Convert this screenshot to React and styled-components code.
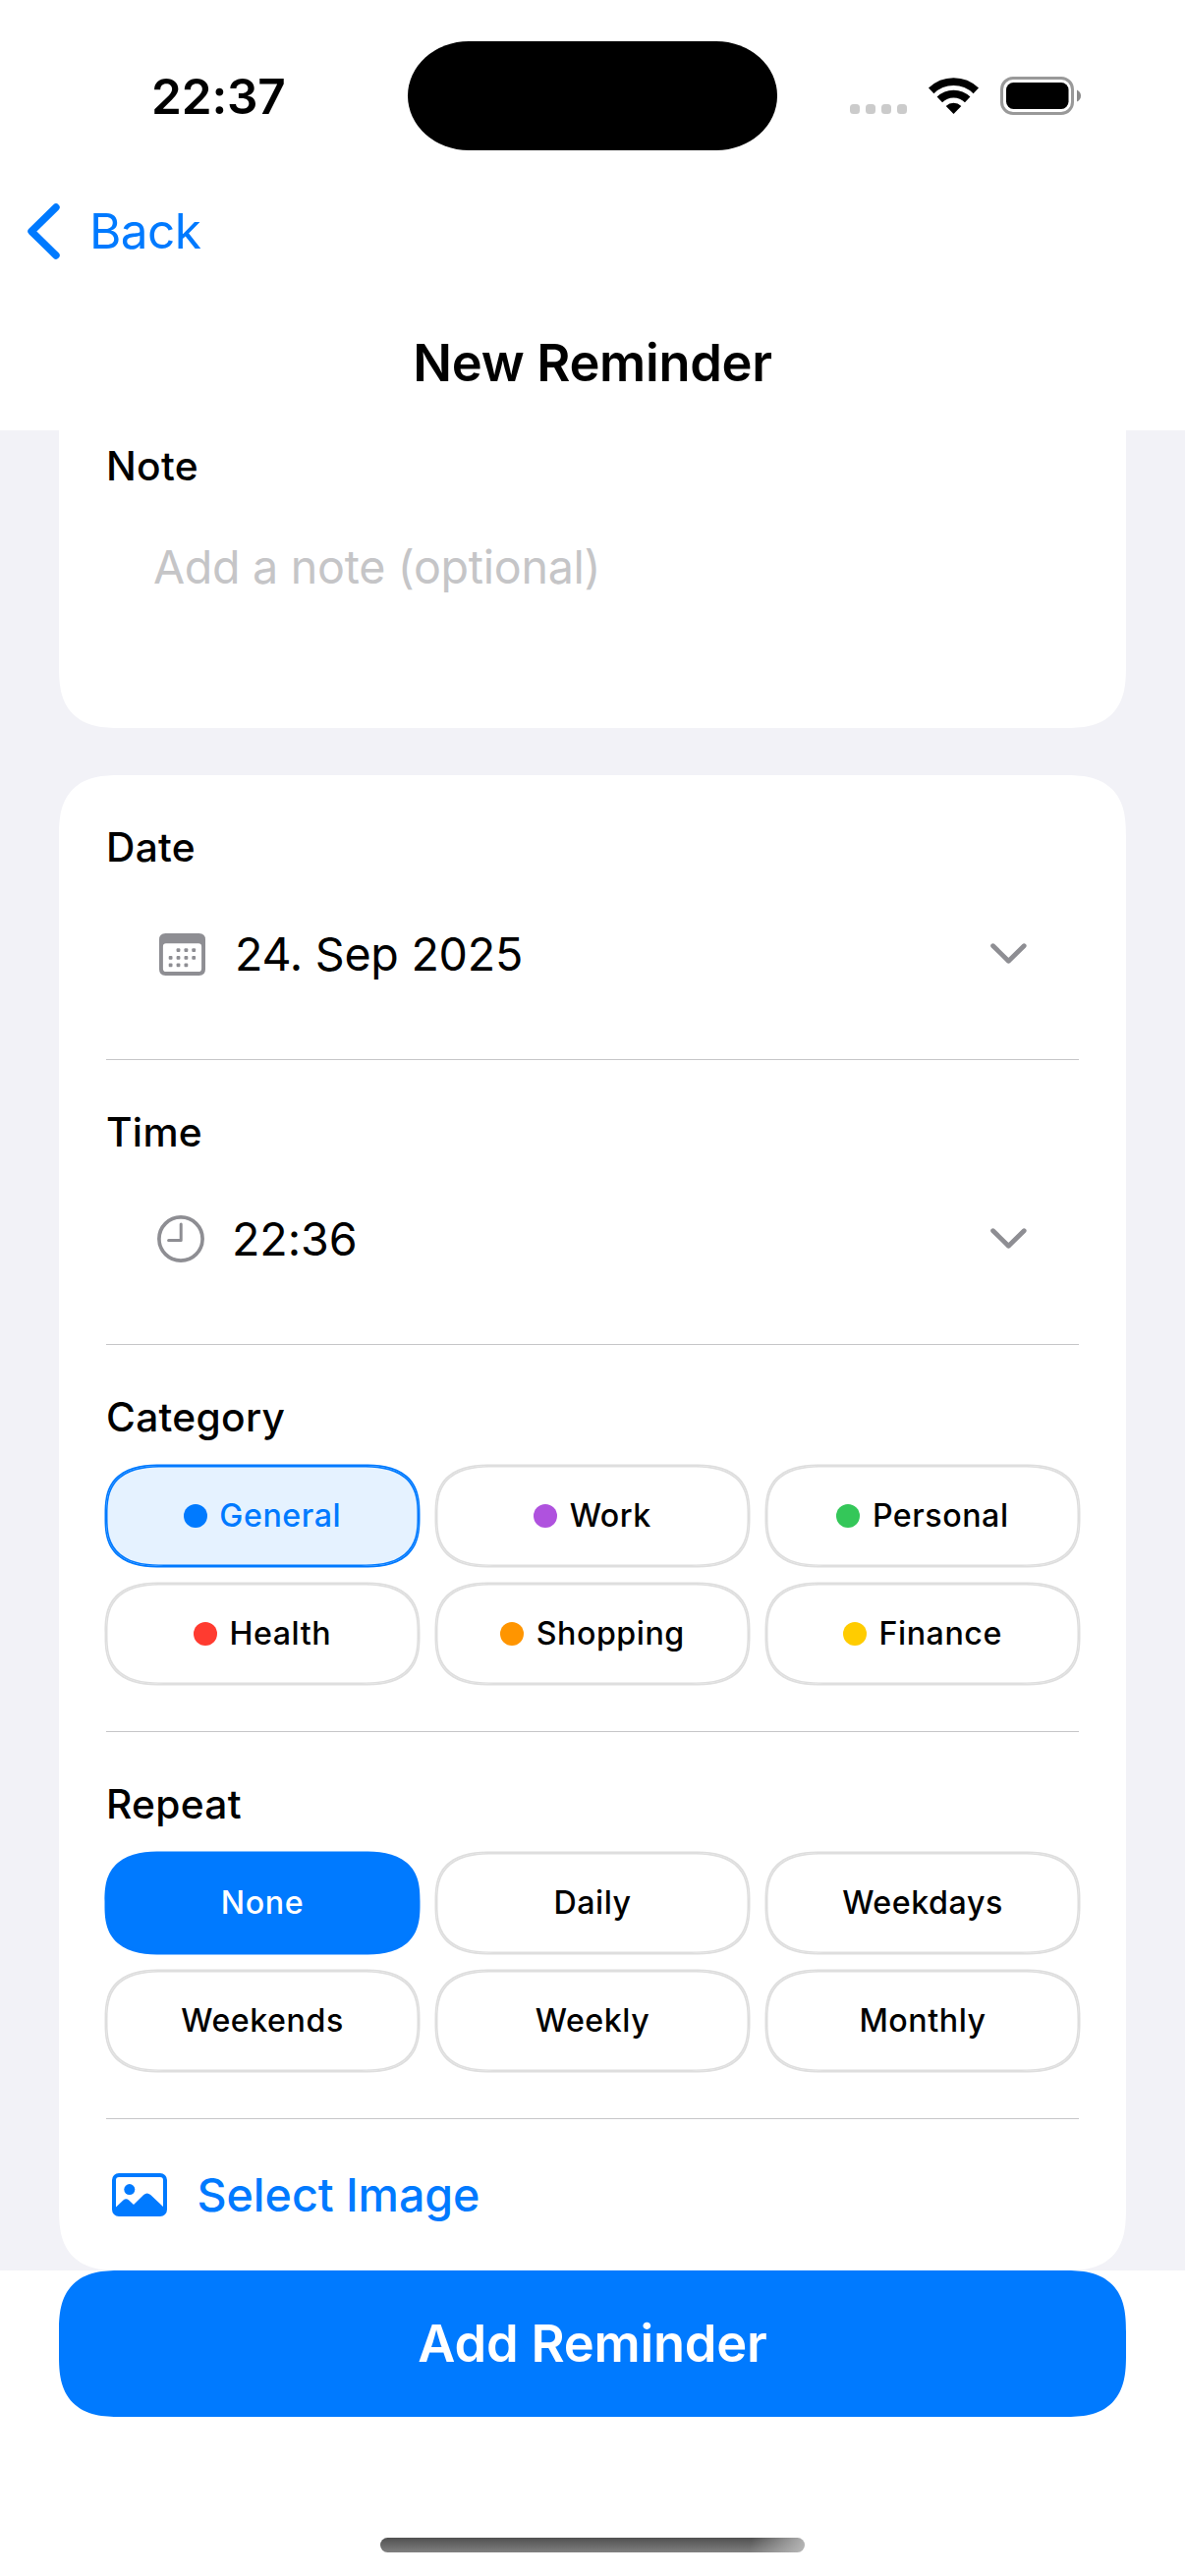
import React from "react";
import styled, { createGlobalStyle, css } from "styled-components";

const BLUE = "#007aff";
const GREY = "#8e8e93";

const GlobalStyle = createGlobalStyle`
  *, *::before, *::after { box-sizing: border-box; }
  body {
    margin: 0;
    background: #fff;
    font-family: Inter, "Liberation Sans", sans-serif;
    color: #000;
    font-feature-settings: "calt" 0;
  }
  button { font-family: inherit; border: 0; background: none; padding: 0; margin: 0; }
  svg { display: block; flex: none; overflow: visible; }
`;

/* Continuous corners, falling back to circular ones. */
const smooth = (r, limit) => css`
  border-radius: ${r}px;
  @supports (corner-shape: superellipse(1.4)) {
    border-radius: ${r * 1.3}px / ${Math.min(r * 1.3, limit)}px;
    corner-shape: superellipse(1.42);
  }
`;

const Screen = styled.div`
  display: flex;
  flex-direction: column;
  width: 1206px;
  height: 2622px;
  overflow: hidden;
  background: #fff;
`;

const StatusBar = styled.header`
  display: grid;
  grid-template-columns: 415px 376px 1fr;
  align-items: center;
  height: 194px;
`;

const Clock = styled.div`
  padding: 2px 0 0 154px;
  font-size: 49.5px;
  font-weight: 600;
  line-height: 60px;
  letter-spacing: -0.15px;
`;

const Island = styled.div`
  height: 111px;
  background: #000;
  border-radius: 62px / 55.5px;
`;

const StatusIcons = styled.div`
  display: flex;
  align-items: center;
  padding-left: 74px;
`;

const SignalDots = styled.div`
  display: flex;
  gap: 6px;
  margin: 28px 22px 0 0;
`;

const SignalDot = styled.i`
  width: 10px;
  height: 10px;
  border-radius: 3.5px;
  background: #cbcbcb;
`;

const Battery = styled.svg`
  margin: 1px 0 0 22px;
`;

const NavBar = styled.nav`
  display: flex;
  align-items: center;
  height: 82px;
  padding-left: 28px;
`;

const BackButton = styled.button`
  display: flex;
  align-items: center;
  gap: 30px;
  color: ${BLUE};
  font-size: 49.5px;
  line-height: 60px;
  letter-spacing: -0.6px;
`;

const Title = styled.h1`
  height: 162px;
  margin: 0;
  padding-top: 63px;
  text-align: center;
  font-size: 52.4px;
  font-weight: 600;
  line-height: 60px;
  letter-spacing: -0.3px;
`;

const Content = styled.main`
  display: flex;
  flex-direction: column;
  gap: 48px;
  height: 1873px;
  padding: 0 60px;
  background: #f2f2f7;
`;

/* The card is scrolled under the title, so it starts above the visible area. */
const NoteCard = styled.section`
  height: 403px;
  margin-top: -100px;
  padding: 111px 48px 0;
  background: #fff;
  clip-path: inset(100px 0 0 0);
  ${smooth(48, 200)}
`;

const DetailsCard = styled.section`
  height: 1522px;
  padding: 48px 48px 0;
  background: #fff;
  ${smooth(48, 200)}
`;

const Label = styled.h2`
  margin: 0;
  font-size: 40.7px;
  font-weight: 500;
  line-height: 51px;
  letter-spacing: 0.3px;
`;

const Placeholder = styled.p`
  margin: 47px 0 0 48px;
  font-size: 46.6px;
  line-height: 60px;
  letter-spacing: -0.3px;
  color: #c5c5c7;
`;

const Field = styled.div`
  display: flex;
  align-items: center;
  height: 166px;
  margin-bottom: 24px;
  padding: 0 53px 0 ${(p) => p.$inset}px;
`;

const FieldValue = styled.span`
  flex: 1;
  padding-left: ${(p) => p.$gap}px;
  font-size: 46.6px;
  line-height: 60px;
  letter-spacing: ${(p) => p.$track}px;
`;

const Chevron = styled.svg`
  margin-top: -2px;
`;

const Divider = styled.hr`
  height: 1px;
  margin: 0 0 48px;
  border: 0;
  background: #c6c6c8;
  &:last-of-type { margin-bottom: 0; }
`;

const ChipGrid = styled.div`
  display: grid;
  grid-template-columns: repeat(3, 1fr);
  grid-auto-rows: 102px;
  gap: 18px;
  margin: 24px 0 48px;
`;

const Chip = styled.button`
  display: flex;
  align-items: center;
  justify-content: center;
  gap: 12.5px;
  font-size: 32.2px;
  font-weight: 500;
  line-height: 40px;
  letter-spacing: 0.55px;
  color: ${(p) => p.$color};
  background: ${(p) => p.$fill};
  box-shadow: 0 0 0 1.5px ${(p) => p.$line}, inset 0 0 0 1.5px ${(p) => p.$line};
  ${smooth(45, 49)}
`;

const Swatch = styled.i`
  width: 24px;
  height: 24px;
  border-radius: 50%;
  background: ${(p) => p.$color};
`;

const SelectImage = styled.button`
  display: flex;
  align-items: center;
  gap: 30.5px;
  height: 154px;
  padding-left: 6px;
  color: ${BLUE};
  font-size: 46.6px;
  font-weight: 500;
  line-height: 60px;
  letter-spacing: -0.05px;
`;

const Footer = styled.footer`
  display: flex;
  flex-direction: column;
  align-items: center;
  padding: 0 60px;
`;

const AddButton = styled.button`
  width: 100%;
  height: 149px;
  background: ${BLUE};
  color: #fff;
  font-size: 52.4px;
  font-weight: 600;
  line-height: 149px;
  letter-spacing: -0.2px;
  ${smooth(48, 72)}
`;

const HomeIndicator = styled.div`
  width: 432px;
  height: 15px;
  margin-top: 123px;
  border-radius: 8px;
  background:
    linear-gradient(100deg, transparent 87%, rgba(190, 190, 190, 0.9) 100%),
    linear-gradient(#505050, #808080);
`;

const categories = [
  { name: "General", color: "#007aff", active: true },
  { name: "Work", color: "#af52de" },
  { name: "Personal", color: "#34c759" },
  { name: "Health", color: "#ff3b30" },
  { name: "Shopping", color: "#ff9500" },
  { name: "Finance", color: "#ffcc00" },
];

const repeats = ["None", "Daily", "Weekdays", "Weekends", "Weekly", "Monthly"];

const ChevronDown = () => (
  <Chevron width="37" height="21" viewBox="0 0 37 21" fill="none">
    <path d="M2.6 2.7 L18.4 18.2 L34.2 2.7" stroke={GREY} strokeWidth="4.8" strokeLinecap="round" strokeLinejoin="round" />
  </Chevron>
);

const CalendarIcon = () => {
  const dots = [
    [19.5, 17.2], [27.4, 17.2], [35.2, 17.2],
    [11.6, 24.8], [19.5, 24.8], [27.4, 24.8], [35.2, 24.8],
    [11.6, 32.4], [19.5, 32.4], [27.4, 32.4],
  ];
  return (
    <svg width="47" height="43" viewBox="0 0 47 43" fill={GREY}>
      <path
        fillRule="evenodd"
        d="M6.5 0 H40.5 Q47 0 47 6.5 V36.5 Q47 43 40.5 43 H6.5 Q0 43 0 36.5 V6.5 Q0 0 6.5 0 Z M7 10.3 Q3.9 10.3 3.9 13.4 V36 Q3.9 39.1 7 39.1 H40 Q43.1 39.1 43.1 36 V13.4 Q43.1 10.3 40 10.3 Z"
      />
      {dots.map(([x, y]) => (
        <rect key={`${x}-${y}`} x={x - 1.9} y={y - 1.9} width="3.8" height="3.8" rx="1" />
      ))}
    </svg>
  );
};

const ClockIcon = () => (
  <svg width="48" height="48" viewBox="0 0 48 48" fill="none" stroke={GREY}>
    <circle cx="24" cy="24" r="22.1" strokeWidth="3.7" />
    <path d="M24.2 9 V25.4 H11.6" strokeWidth="3" strokeLinecap="round" strokeLinejoin="round" />
  </svg>
);

const ImageIcon = () => (
  <svg width="56" height="44" viewBox="0 0 56 44" fill={BLUE}>
    <rect x="2" y="2" width="52" height="40" rx="5" fill="none" stroke={BLUE} strokeWidth="4" />
    <circle cx="17.8" cy="16.6" r="5.5" />
    <path d="M3 35.5 L11.4 27.6 Q14.3 25 17.2 27.6 L22 32 L32.2 22 Q35.7 18.8 39.2 22 L53 35 V38 Q53 42 49 42 H7 Q3 42 3 38 Z" />
  </svg>
);

export default function App() {
  return (
    <>
      <GlobalStyle />
      <Screen>
        <StatusBar>
          <Clock>22:37</Clock>
          <Island />
          <StatusIcons>
            <SignalDots>
              <SignalDot /><SignalDot /><SignalDot /><SignalDot />
            </SignalDots>
            <svg width="51" height="37" viewBox="0 0 51 37" fill="none" stroke="#000">
              <path d="M2.7 13.4 A32.8 32.8 0 0 1 48.3 13.4" strokeWidth="7.8" />
              <path d="M11.3 22.4 A20.3 20.3 0 0 1 39.7 22.4" strokeWidth="7.8" />
              <path d="M25.5 37 L17.7 28.9 A11.5 11.5 0 0 1 33.3 28.9 Z" fill="#000" stroke="none" />
            </svg>
            <Battery width="83" height="39" viewBox="0 0 83 39">
              <rect x="1.5" y="1.5" width="72" height="36" rx="11.5" fill="none" stroke="#999" strokeWidth="3" />
              <rect x="6" y="6" width="63.5" height="27" rx="7.5" />
              <path d="M78 13.5 Q82 15.5 82 19.5 Q82 23.5 78 25.5 Z" fill="#8a8a8a" />
            </Battery>
          </StatusIcons>
        </StatusBar>

        <NavBar>
          <BackButton>
            <svg width="33" height="57" viewBox="0 0 33 57" fill="none">
              <path d="M29 4 L4 28.5 L29 53" stroke={BLUE} strokeWidth="7.4" strokeLinecap="round" strokeLinejoin="round" />
            </svg>
            Back
          </BackButton>
        </NavBar>
        <Title>New Reminder</Title>

        <Content>
          <NoteCard>
            <Label>Note</Label>
            <Placeholder>Add a note (optional)</Placeholder>
          </NoteCard>

          <DetailsCard>
            <Label>Date</Label>
            <Field $inset={54}>
              <CalendarIcon />
              <FieldValue $gap={30} $track={-0.25}>24. Sep 2025</FieldValue>
              <ChevronDown />
            </Field>
            <Divider />

            <Label>Time</Label>
            <Field $inset={52}>
              <ClockIcon />
              <FieldValue $gap={28} $track={-0.1}>22:36</FieldValue>
              <ChevronDown />
            </Field>
            <Divider />

            <Label>Category</Label>
            <ChipGrid>
              {categories.map((c) => (
                <Chip
                  key={c.name}
                  $color={c.active ? BLUE : "#000"}
                  $fill={c.active ? "#e5f2ff" : "#fff"}
                  $line={c.active ? BLUE : "#dedede"}
                >
                  <Swatch $color={c.color} />
                  {c.name}
                </Chip>
              ))}
            </ChipGrid>
            <Divider />

            <Label>Repeat</Label>
            <ChipGrid>
              {repeats.map((name, i) => (
                <Chip
                  key={name}
                  $color={i === 0 ? "#fff" : "#000"}
                  $fill={i === 0 ? BLUE : "#fff"}
                  $line={i === 0 ? BLUE : "#dedede"}
                >
                  {name}
                </Chip>
              ))}
            </ChipGrid>
            <Divider />

            <SelectImage>
              <ImageIcon />
              Select Image
            </SelectImage>
          </DetailsCard>
        </Content>

        <Footer>
          <AddButton>Add Reminder</AddButton>
          <HomeIndicator />
        </Footer>
      </Screen>
    </>
  );
}
